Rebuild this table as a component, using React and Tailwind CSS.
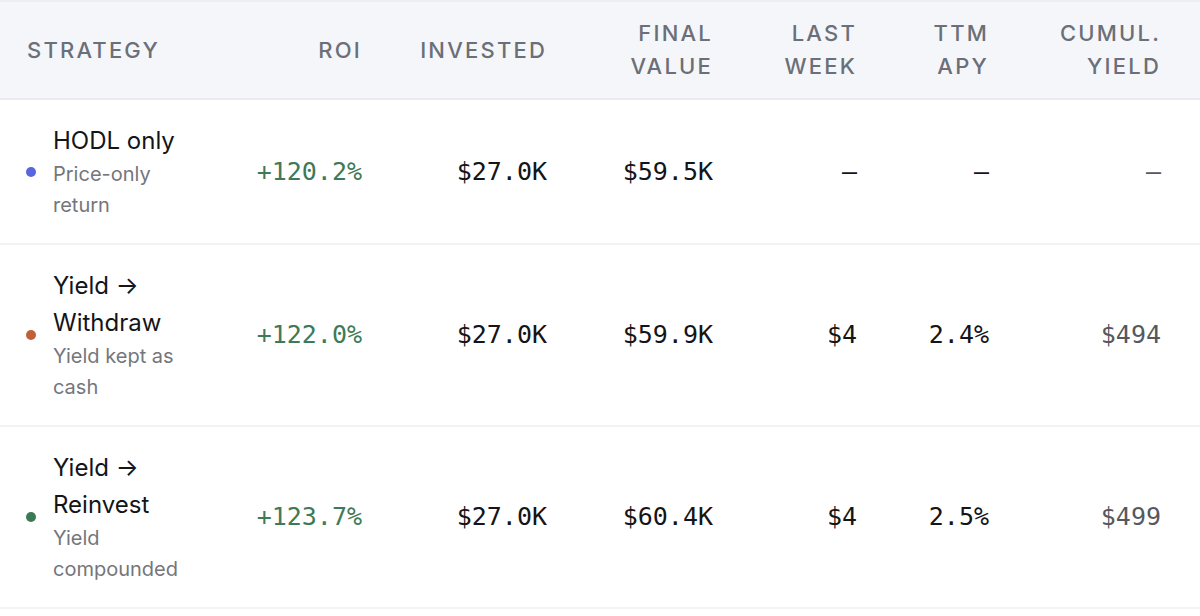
import React from 'react';

// strategy comparison table
const rows = [
    {
        title: ['HODL only'],
        sub: ['Price-only', 'return'],
        dot: 'bg-[#5865df]',
        roi: '+120.2%',
        invested: '$27.0K',
        final: '$59.5K',
        lastWeek: '—',
        ttm: '—',
        cumul: '—',
    },
    {
        title: ['Yield →', 'Withdraw'],
        sub: ['Yield kept as', 'cash'],
        dot: 'bg-[#c0603a]',
        roi: '+122.0%',
        invested: '$27.0K',
        final: '$59.9K',
        lastWeek: '$4',
        ttm: '2.4%',
        cumul: '$494',
    },
    {
        title: ['Yield →', 'Reinvest'],
        sub: ['Yield', 'compounded'],
        dot: 'bg-[#3b7a55]',
        roi: '+123.7%',
        invested: '$27.0K',
        final: '$60.4K',
        lastWeek: '$4',
        ttm: '2.5%',
        cumul: '$499',
    },
];

const cols = 'grid grid-cols-[220px_142px_185px_166px_144px_132px_172px] pr-[39px]';
const mono = "font-['DejaVu_Sans_Mono',monospace] text-[25px]";

function Head({ children }) {
    return <div className="text-right">{children}</div>;
}

export default function App() {
    return (
        <div className="w-[1200px] h-[616px] overflow-hidden bg-white font-['Inter',sans-serif]">
            {/* header */}
            <div className={`${cols} items-center h-[100px] bg-[#f5f6fa] border-t-2 border-[#eceef3] border-b-2 border-b-[#e9ebf0] text-[22px] leading-[33px] tracking-[0.1em] text-[#6b6f78] font-medium`}>
                <div className="pl-[27px]">STRATEGY</div>
                <Head>ROI</Head>
                <Head>INVESTED</Head>
                <Head>FINAL<br />VALUE</Head>
                <Head>LAST<br />WEEK</Head>
                <Head>TTM<br />APY</Head>
                <Head>CUMUL.<br />YIELD</Head>
            </div>

            {rows.map((r, i) => (
                <div key={i} className={`${cols} items-center py-[22px] border-b-2 border-[#f2f3f5]`}>
                    <div className="flex items-center pl-[26px] gap-[17px]">
                        <span className={`w-[10px] h-[10px] rounded-full shrink-0 ${r.dot}`} />
                        <div>
                            <div className="text-[24px] leading-[37px] text-[#141518]">
                                {r.title.map((t, j) => <div key={j}>{t}</div>)}
                            </div>
                            <div className="text-[20px] leading-[31px] text-[#74767c]">
                                {r.sub.map((t, j) => <div key={j}>{t}</div>)}
                            </div>
                        </div>
                    </div>
                    <div className={`${mono} text-right text-[#3f7a56]`}>{r.roi}</div>
                    <div className={`${mono} text-right text-[#141518]`}>{r.invested}</div>
                    <div className={`${mono} text-right text-[#141518]`}>{r.final}</div>
                    <div className={`${mono} text-right text-[#141518]`}>{r.lastWeek}</div>
                    <div className={`${mono} text-right text-[#141518]`}>{r.ttm}</div>
                    <div className={`${mono} text-right text-[#55585f]`}>{r.cumul}</div>
                </div>
            ))}
        </div>
    );
}
